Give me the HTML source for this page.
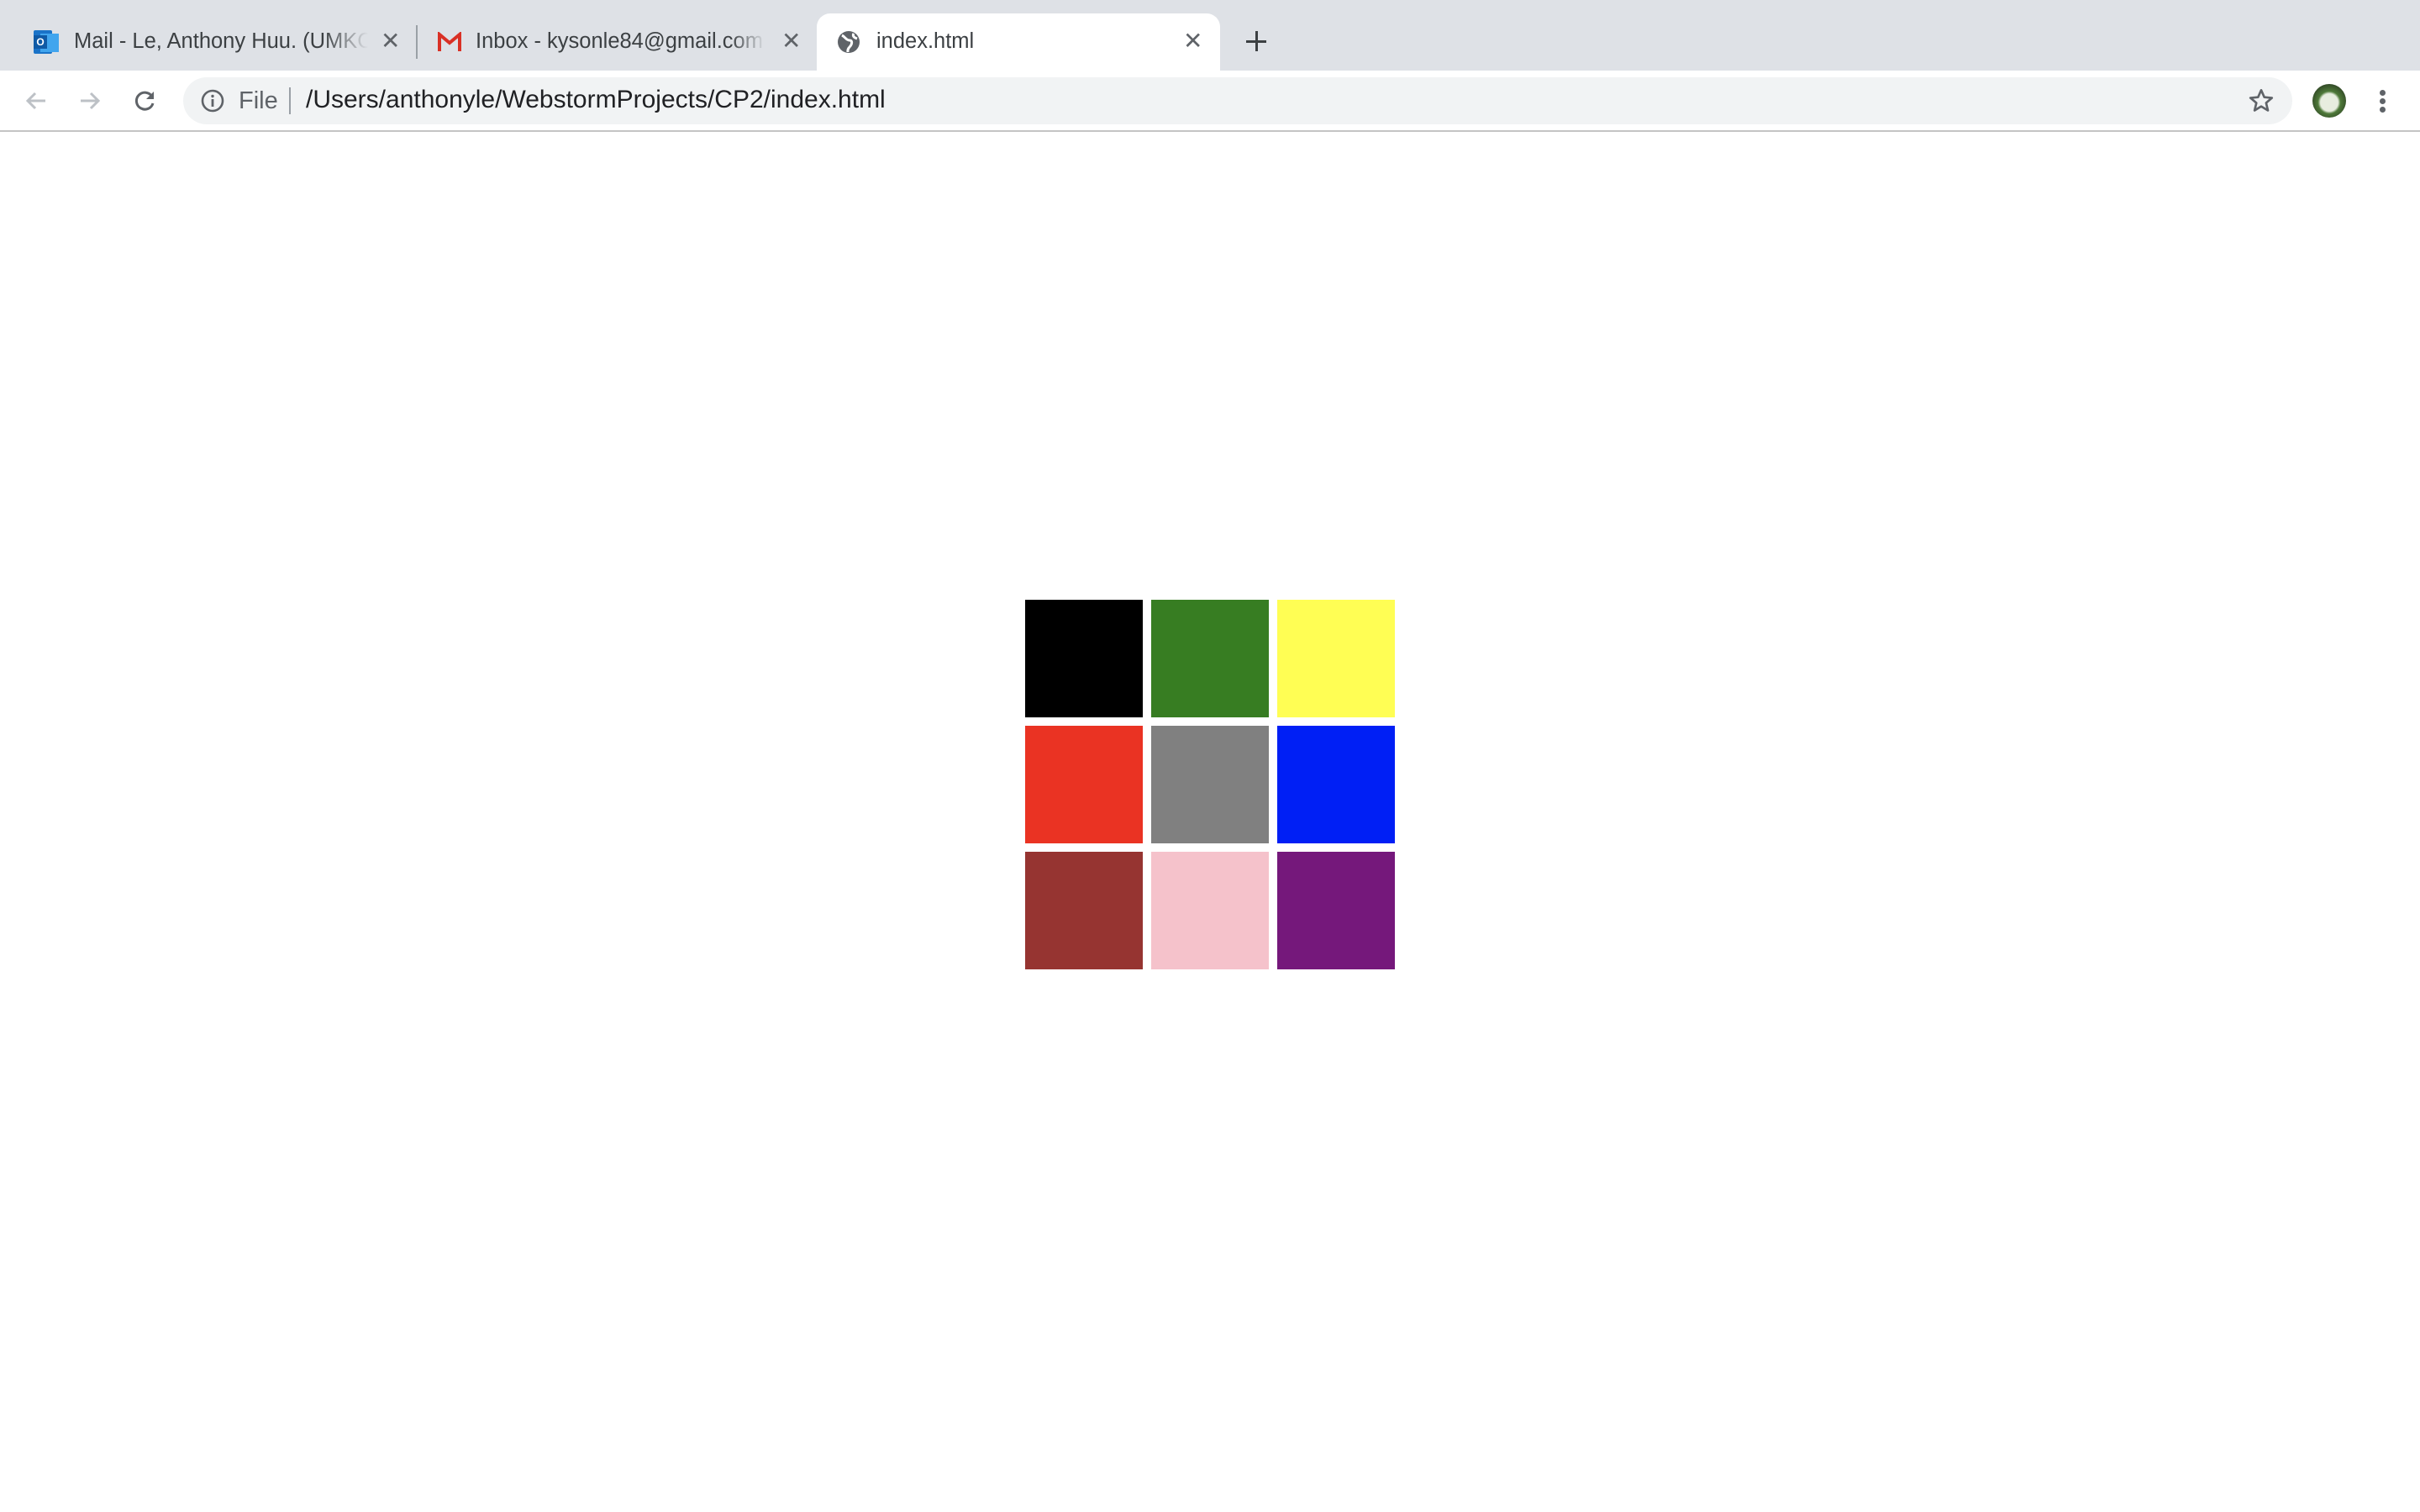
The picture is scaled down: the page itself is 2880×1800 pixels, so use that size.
<!DOCTYPE html>
<html><head><style>
*{margin:0;padding:0;box-sizing:border-box}
body{width:2880px;height:1800px;background:#fff;position:relative;overflow:hidden;font-family:"Liberation Sans",sans-serif}
.strip{position:absolute;left:0;top:0;width:2880px;height:84px;background:#dee1e6}
.tab{position:absolute;top:16px;height:68px;background:#fff;border-radius:16px 16px 0 0;left:972px;width:480px}
.t{position:absolute;font-size:25.5px;color:#3c4043;white-space:nowrap;top:35px}
.x{position:absolute;font-size:28px;color:#5f6368;top:32px}
.tb{position:absolute;left:0;top:84px;width:2880px;height:73px;background:#fff;border-bottom:2px solid #c4c4c4}
.omni{position:absolute;left:218px;top:92px;width:2510px;height:56px;background:#f1f3f4;border-radius:28px}
.sq{position:absolute;width:140px;height:140px}
</style></head><body>
<div class="strip"></div>
<div class="tab"></div>
<!-- tab1 -->
<div style="position:absolute;left:40px;top:36px;width:22px;height:28px;background:#1a73c8;border-radius:2px"></div>
<div style="position:absolute;left:48px;top:40px;width:22px;height:22px;background:#41a5ee"></div>
<div style="position:absolute;left:40px;top:42px;width:16px;height:16px;background:#0f5aa6;color:#fff;font-size:12px;text-align:center;line-height:16px;font-weight:bold">O</div>
<div class="t" style="left:88px;width:350px;overflow:hidden;-webkit-mask-image:linear-gradient(90deg,#000 85%,transparent)">Mail - Le, Anthony Huu. (UMKC</div>
<div class="x" style="left:453px">✕</div>
<div style="position:absolute;left:495px;top:30px;width:2px;height:40px;background:#9aa0a6"></div>
<!-- gmail -->
<svg style="position:absolute;left:520px;top:38px" width="30" height="24" viewBox="0 0 30 24"><path d="M3 23V3l12 10L27 3v20" fill="none" stroke="#d93025" stroke-width="4"/></svg>
<div class="t" style="left:566px;width:345px;overflow:hidden;-webkit-mask-image:linear-gradient(90deg,#000 88%,transparent)">Inbox - kysonle84@gmail.com - Gm</div>
<div class="x" style="left:930px">✕</div>
<!-- active -->
<svg style="position:absolute;left:996px;top:36px" width="28" height="28" viewBox="0 0 28 28"><circle cx="14" cy="14" r="13" fill="#5f6368"/><path d="M6 6c4 2 5 6 9 6s3 5 0 8-2 5-2 6M20 4c-2 3 1 5 4 6" stroke="#fff" stroke-width="3" fill="none"/></svg>
<div class="t" style="left:1043px">index.html</div>
<div class="x" style="left:1408px">✕</div>
<div style="position:absolute;left:1483px;top:48px;width:24px;height:3px;background:#3c4043"></div>
<div style="position:absolute;left:1494px;top:37px;width:3px;height:24px;background:#3c4043"></div>
<!-- toolbar -->
<div class="tb"></div>
<div class="omni"></div>
<svg style="position:absolute;left:28px;top:105px" width="30" height="30" viewBox="0 0 30 30"><path d="M26 15H5M14 6l-9 9 9 9" stroke="#bdc1c6" stroke-width="3" fill="none"/></svg>
<svg style="position:absolute;left:92px;top:105px" width="30" height="30" viewBox="0 0 30 30"><path d="M4 15h21M16 6l9 9-9 9" stroke="#bdc1c6" stroke-width="3" fill="none"/></svg>
<svg style="position:absolute;left:156px;top:104px" width="32" height="32" viewBox="0 0 32 32"><path d="M25 11A10 10 0 1 0 26 19" stroke="#5f6368" stroke-width="3" fill="none"/><path d="M27 5v9h-9z" fill="#5f6368"/></svg>
<svg style="position:absolute;left:238px;top:105px" width="30" height="30" viewBox="0 0 30 30"><circle cx="15" cy="15" r="12" stroke="#5f6368" stroke-width="2.6" fill="none"/><rect x="13.6" y="13" width="2.8" height="9" fill="#5f6368"/><circle cx="15" cy="9.5" r="1.7" fill="#5f6368"/></svg>
<div style="position:absolute;left:284px;top:104px;font-size:29px;color:#5f6368">File</div>
<div style="position:absolute;left:344px;top:104px;width:2px;height:32px;background:#9aa0a6"></div>
<div style="position:absolute;left:364px;top:102px;font-size:30px;color:#202124">/Users/anthonyle/WebstormProjects/CP2/index.html</div>
<svg style="position:absolute;left:2675px;top:104px" width="32" height="32" viewBox="0 0 24 24"><path d="M12 2.5l2.8 6.3 6.8.6-5.2 4.5 1.6 6.7L12 17l-5.9 3.6 1.6-6.7L2.4 9.4l6.8-.6z" fill="none" stroke="#5f6368" stroke-width="2" stroke-linejoin="round"/></svg>
<div style="position:absolute;left:2752px;top:100px;width:40px;height:40px;border-radius:50%;background:radial-gradient(circle at 50% 55%,#e8eddf 0 35%,#4f7a3a 45%,#2c3f22 80%)"></div>
<div style="position:absolute;left:2832px;top:107px;width:7px;height:7px;border-radius:50%;background:#5f6368"></div>
<div style="position:absolute;left:2832px;top:117px;width:7px;height:7px;border-radius:50%;background:#5f6368"></div>
<div style="position:absolute;left:2832px;top:127px;width:7px;height:7px;border-radius:50%;background:#5f6368"></div>
<!-- grid -->
<div class="sq" style="left:1220px;top:714px;background:#000"></div>
<div class="sq" style="left:1370px;top:714px;background:#377d22"></div>
<div class="sq" style="left:1520px;top:714px;background:#fffe54"></div>
<div class="sq" style="left:1220px;top:864px;background:#ea3323"></div>
<div class="sq" style="left:1370px;top:864px;background:#808080"></div>
<div class="sq" style="left:1520px;top:864px;background:#001ff5"></div>
<div class="sq" style="left:1220px;top:1014px;background:#963431"></div>
<div class="sq" style="left:1370px;top:1014px;background:#f5c2cb"></div>
<div class="sq" style="left:1520px;top:1014px;background:#75187b"></div>
</body></html>
